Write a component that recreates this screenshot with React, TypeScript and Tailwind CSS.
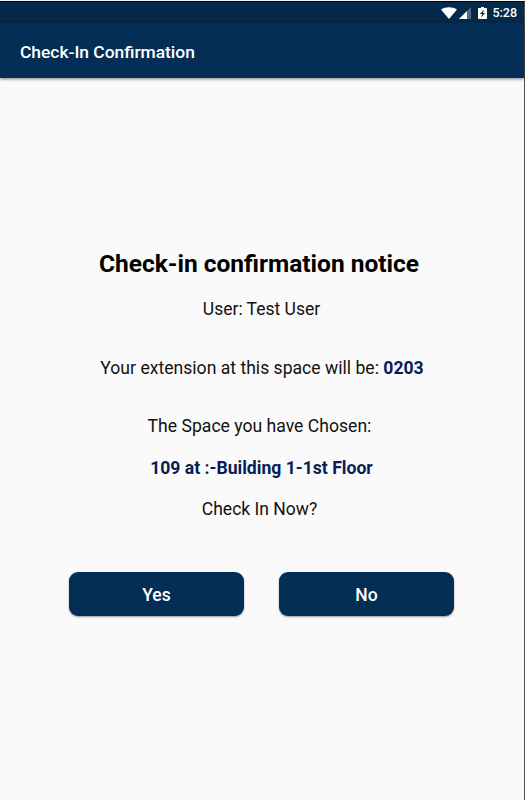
import React from 'react'

function StatusBar() {
  return (
    <div className="flex h-[21px] items-center justify-end bg-[#05294a] pr-[7px] text-white">
      <svg className="h-[12px] w-[16px]" viewBox="0 0 16 12" fill="currentColor">
        <path d="M0 2.6C4.6-.6 11.4-.6 16 2.6L8 12z" />
      </svg>
      <svg className="ml-[2px] h-[12px] w-[12px]" viewBox="0 0 12 12" fill="currentColor">
        <path d="M12 0v12H0z" opacity="0.3" />
        <path d="M8 4v8H0z" />
      </svg>
      <svg className="ml-[7px] h-[12px] w-[9px]" viewBox="0 0 9 12" fill="currentColor">
        <path fillRule="evenodd" d="M3 0h3v1h2.2c.5 0 .8.3.8.8v9.4c0 .5-.3.8-.8.8H.8c-.5 0-.8-.3-.8-.8V1.800c0-.5.3-.8.8-.8H3zM6 2.600 1.800 7h2.400L3 10.600 7.300 6H5z" />
      </svg>
      <span className="ml-[5px] text-[12.5px] font-medium leading-[20px]">5:28</span>
    </div>
  )
}

function ActionButton({ label }: { label: string }) {
  return (
    <button className="h-[44px] w-[175px] rounded-[9px] bg-[#052e57] pl-[1px] pt-[2px] text-[17.5px] font-medium text-white shadow-[0_1px_2px_rgba(0,0,0,0.4)]">
      {label}
    </button>
  )
}

export default function App() {
  return (
    <div className="flex h-[800px] w-[525px] flex-col border-t border-[#f4f4f4] bg-[#fafafa] font-['Roboto',sans-serif]">
      <div className="flex flex-1 flex-col border-r border-t border-r-[#4c4c4c] border-t-black">
        <StatusBar />
        <header className="flex h-[55px] items-center bg-[#052e57] pl-[20px] pt-[2px] shadow-[0_1px_3px_rgba(0,0,0,0.5)]">
          <h1 className="text-[17.4px] font-medium leading-[24px] text-white">Check-In Confirmation</h1>
        </header>

        <main className="flex flex-col items-center pr-[2px] pt-[170px] text-[17.5px] leading-[24px] text-[#111111]">
          <h2 className="pr-[4px] text-[24.5px] font-bold leading-[32px] text-black">Check-in confirmation notice</h2>
          <p className="mt-[17px] pl-[1px]">User: Test User</p>
          <p className="mt-[35px] pl-[2px] text-[17.6px]">
            Your extension at this space will be: <b className="font-bold text-[#051e57]">0203</b>
          </p>
          <p className="mt-[34px] pr-[3px] text-[17.6px]">The Space you have Chosen:</p>
          <p className="mt-[18px] pl-[1px] text-[17.6px] font-bold text-[#051e57]">109 at :-Building 1-1st Floor</p>
          <p className="mt-[17px] pr-[3px]">Check In Now?</p>

          <div className="mt-[51px] flex gap-[35px]">
            <ActionButton label="Yes" />
            <ActionButton label="No" />
          </div>
        </main>
      </div>
    </div>
  )
}
